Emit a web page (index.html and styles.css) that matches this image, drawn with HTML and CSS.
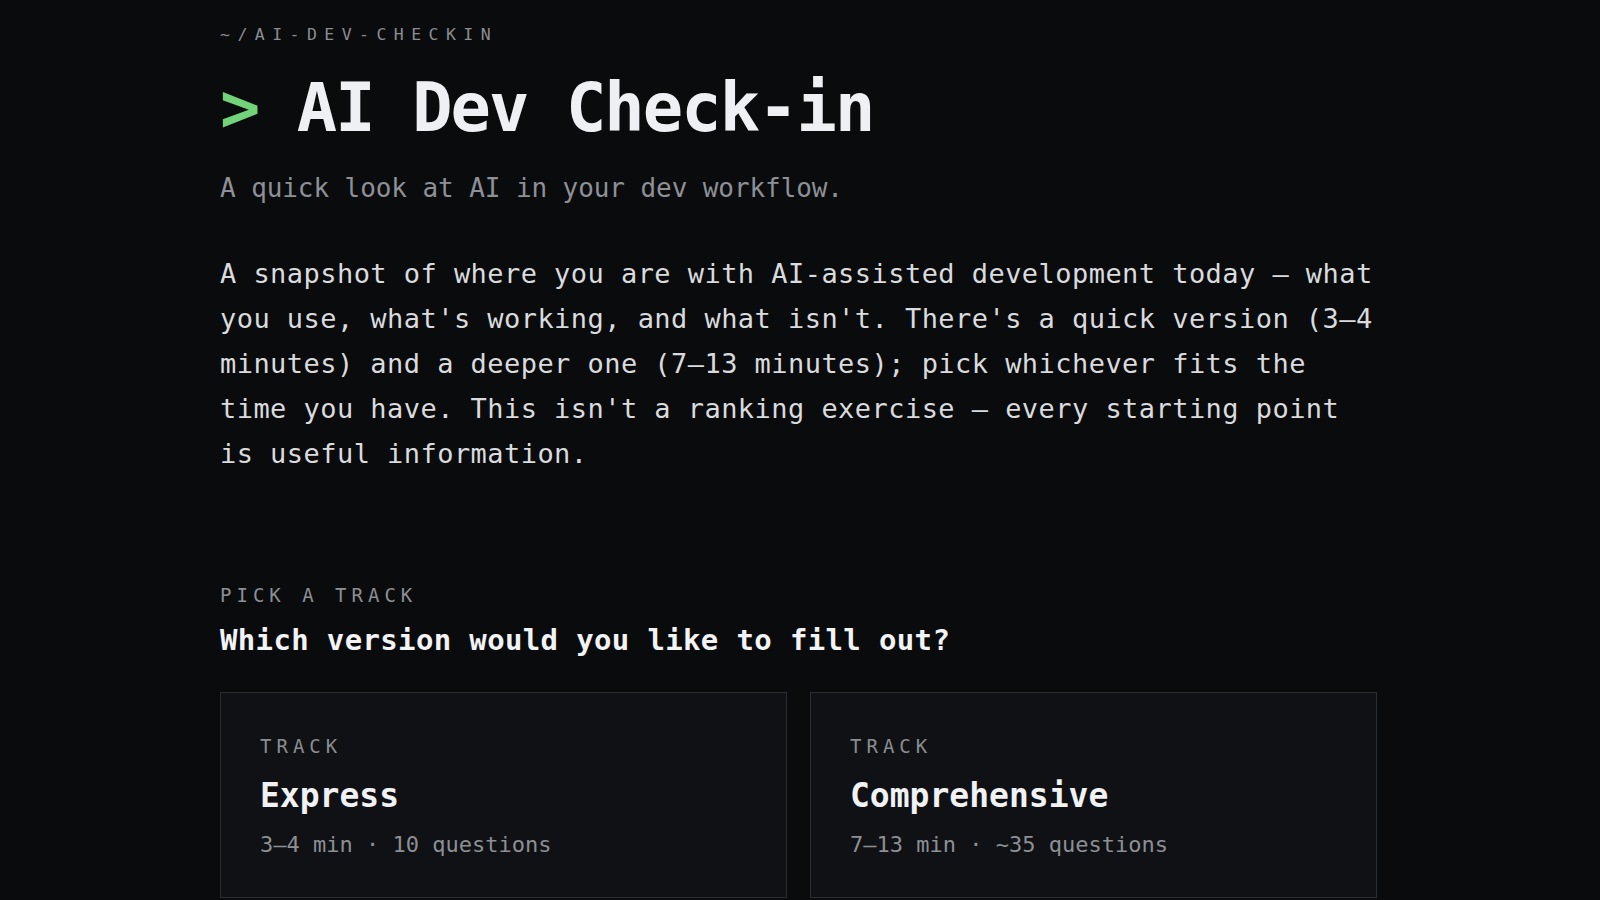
FILE: index.html
```html
<!DOCTYPE html>
<html lang="en">
<head>
<meta charset="utf-8">
<title>AI Dev Check-in</title>
<link rel="stylesheet" href="styles.css">
</head>
<body>
<main class="page">
  <header class="hero">
    <div class="eyebrow">~/AI-DEV-CHECKIN</div>
    <h1 class="title"><span class="prompt">&gt;</span> AI Dev Check-in</h1>
    <p class="subtitle">A quick look at AI in your dev workflow.</p>
    <p class="intro">A snapshot of where you are with AI-assisted development today — what you use, what's working, and what isn't. There's a quick version (3–4 minutes) and a deeper one (7–13 minutes); pick whichever fits the time you have. This isn't a ranking exercise — every starting point is useful information.</p>
  </header>
  <section class="tracks">
    <div class="section-label">PICK A TRACK</div>
    <h2 class="section-title">Which version would you like to fill out?</h2>
    <div class="track-grid">
      <button class="track-card" type="button">
        <span class="track-label">TRACK</span>
        <span class="track-name">Express</span>
        <span class="track-meta">3–4 min · 10 questions</span>
      </button>
      <button class="track-card" type="button">
        <span class="track-label">TRACK</span>
        <span class="track-name">Comprehensive</span>
        <span class="track-meta">7–13 min · ~35 questions</span>
      </button>
    </div>
  </section>
</main>
</body>
</html>
```

FILE: styles.css
```css
* { box-sizing: border-box; }

html, body {
  margin: 0;
  padding: 0;
  background: #0a0b0d;
}

body {
  font-family: "DejaVu Sans Mono", "Liberation Mono", monospace;
  color: #d9dbde;
}

.page {
  width: 1157px;
  margin: 0 0 0 220px;
  padding-top: 23px;
}

.eyebrow {
  font-size: 16.5px;
  line-height: 24px;
  letter-spacing: 7.45px;
  color: #8a8d92;
}

.title {
  margin: 21px 0 0;
  font-size: 67px;
  line-height: 80px;
  font-weight: 700;
  letter-spacing: -1.9px;
  color: #eef0f3;
}

.prompt {
  color: #73d37b;
}

.subtitle {
  margin: 22px 0 0;
  font-size: 26px;
  line-height: 36px;
  letter-spacing: -0.08px;
  color: #8d9096;
}

.intro {
  margin: 45px 0 0;
  font-size: 27px;
  line-height: 45px;
  letter-spacing: 0.45px;
  color: #d9dbde;
}

.tracks {
  margin-top: 107px;
}

.section-label {
  font-size: 19px;
  line-height: 24px;
  letter-spacing: 5px;
  color: #8c8f94;
}

.section-title {
  margin: 15px 0 0;
  font-size: 29px;
  line-height: 36px;
  font-weight: 700;
  letter-spacing: 0.35px;
  color: #f2f3f5;
}

.track-grid {
  margin-top: 34px;
  display: grid;
  grid-template-columns: 1fr 1fr;
  gap: 23px;
}

.track-card {
  display: flex;
  flex-direction: column;
  align-items: flex-start;
  text-align: left;
  padding: 41px 39px 37px;
  background: #0f1115;
  border: 1px solid #2a2d31;
  border-radius: 0;
  font-family: inherit;
  cursor: pointer;
}

.track-label {
  font-size: 19px;
  line-height: 24px;
  letter-spacing: 5px;
  color: #8a8d92;
}

.track-name {
  margin-top: 16px;
  font-size: 33px;
  line-height: 44px;
  font-weight: 700;
  color: #f0f2f4;
}

.track-meta {
  margin-top: 12px;
  font-size: 22px;
  line-height: 30px;
  color: #8c8f94;
}
```
